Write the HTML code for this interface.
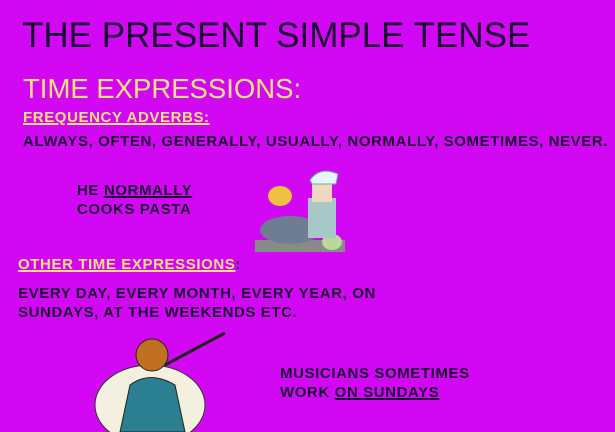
<!DOCTYPE html><html><head><style>
body{margin:0;width:615px;height:432px;background:#d208f5;overflow:hidden;position:relative;font-family:"Liberation Sans",sans-serif}
.t{position:absolute;white-space:nowrap}
.b{font-weight:bold;font-size:15px;color:#1c0533;letter-spacing:0.6px}
.y{color:#ffe27a}
u{text-decoration-thickness:1.5px}
</style></head><body>
<div class="t" style="left:22px;top:16px;font-size:35px;color:#1a0530">THE PRESENT SIMPLE TENSE</div>
<div class="t y" style="left:23px;top:73px;font-size:27.5px">TIME EXPRESSIONS:</div>
<div class="t b y" style="left:23px;top:109px"><u>FREQUENCY ADVERBS:</u></div>
<div class="t b" style="left:23px;top:133px">ALWAYS, OFTEN, GENERALLY, USUALLY, NORMALLY, SOMETIMES, NEVER.</div>
<div class="t b" style="left:77px;top:181px;line-height:19px">HE <u>NORMALLY</u><br>COOKS PASTA</div>
<div class="t b" style="left:18px;top:256px"><u class="y">OTHER TIME EXPRESSIONS</u>:</div>
<div class="t b" style="left:18px;top:284px;line-height:19px">EVERY DAY, EVERY MONTH, EVERY YEAR, ON<br>SUNDAYS, AT THE WEEKENDS ETC.</div>
<div class="t b" style="left:280px;top:364px;line-height:19px">MUSICIANS SOMETIMES<br>WORK <u>ON SUNDAYS</u></div>
<svg class="t" style="left:250px;top:168px" width="100" height="90">
<rect x="5" y="72" width="90" height="12" fill="#8a8a8a"/>
<ellipse cx="40" cy="62" rx="30" ry="14" fill="#6f7d92"/>
<ellipse cx="82" cy="74" rx="10" ry="8" fill="#b8d8a0"/>
<rect x="58" y="30" width="28" height="40" fill="#a8c8c8"/>
<rect x="62" y="12" width="20" height="22" fill="#f0d8c0"/>
<path d="M60 12 Q70 -2 88 6 L86 16 L62 16Z" fill="#e8f4ff" stroke="#6aa" />
<ellipse cx="30" cy="28" rx="12" ry="10" fill="#f0c040"/>
</svg>
<svg class="t" style="left:90px;top:325px" width="140" height="107">
<ellipse cx="60" cy="80" rx="55" ry="40" fill="#f4f0e0" stroke="#333"/>
<path d="M30 107 L40 60 Q60 45 85 60 L95 107Z" fill="#2a8090" stroke="#222"/>
<circle cx="62" cy="30" r="16" fill="#c07020" stroke="#222"/>
<path d="M75 40 L135 8" stroke="#222" stroke-width="3"/>
</svg>
</body></html>
